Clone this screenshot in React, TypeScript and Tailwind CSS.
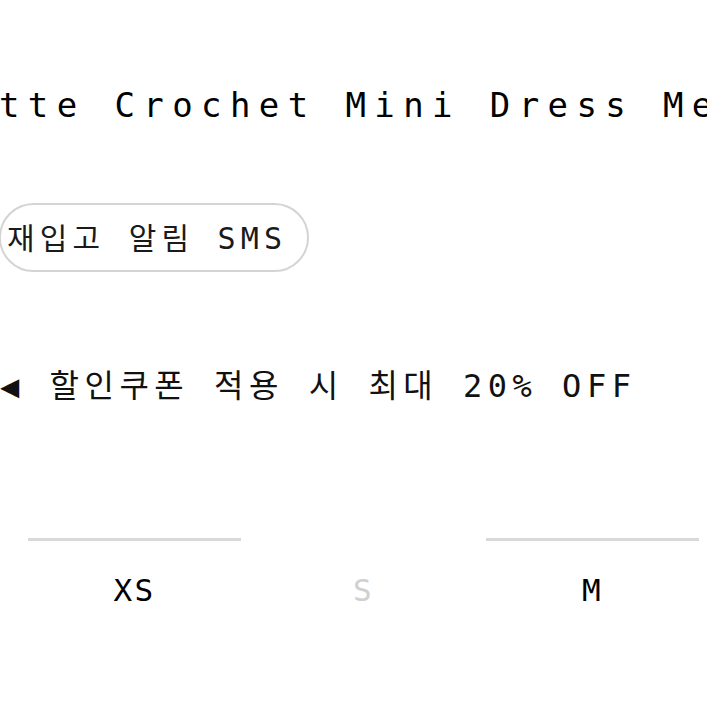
import React from "react";

const mono = '"DejaVu Sans Mono", "Noto Sans CJK KR", monospace';

export default function App() {
  const sizes = [
    { label: "XS", available: true },
    { label: "S", available: false },
    { label: "M", available: true },
  ];
  return (
    <div
      className="w-[707px] h-[707px] overflow-hidden bg-white text-black flex flex-col items-start"
      style={{ fontFamily: mono }}
    >
      <div className="mt-[85px] ml-[-1px] whitespace-nowrap text-[34px] leading-[40px] tracking-[8.4px]">
        tte Crochet Mini Dress Me
      </div>

      <div className="mt-[78px] ml-[-1px] h-[69px] flex items-center pt-[3px] pl-[6px] pr-[20px] rounded-full border-2 border-[#d4d4d4] text-[30px] leading-[30px] text-[#1a1a1a]">
        <span className="whitespace-pre tracking-[5.2px]">재입고 알림 SMS</span>
      </div>

      <div className="mt-[94px] whitespace-pre text-[32px] leading-[40px] tracking-[5.5px] text-[#111]">
        ◀ 할인쿠폰 적용 시 최대 20% OFF
      </div>

      <div className="mt-[132px] ml-[28px] flex gap-[16px]">
        {sizes.map((s) => (
          <div
            key={s.label}
            className={
              s.available
                ? "w-[213px] shrink-0 border-t-[3px] border-[#d9d9d9] pt-[29px] flex justify-center"
                : "w-[213px] shrink-0 border-t-[3px] border-transparent pt-[29px] flex justify-center"
            }
          >
            <span
              className={
                s.available
                  ? "text-[31px] leading-[40px] tracking-[2.3px] text-black"
                  : "text-[31px] leading-[40px] tracking-[2.3px] text-[#d0d0d0]"
              }
            >
              {s.label}
            </span>
          </div>
        ))}
      </div>
    </div>
  );
}
